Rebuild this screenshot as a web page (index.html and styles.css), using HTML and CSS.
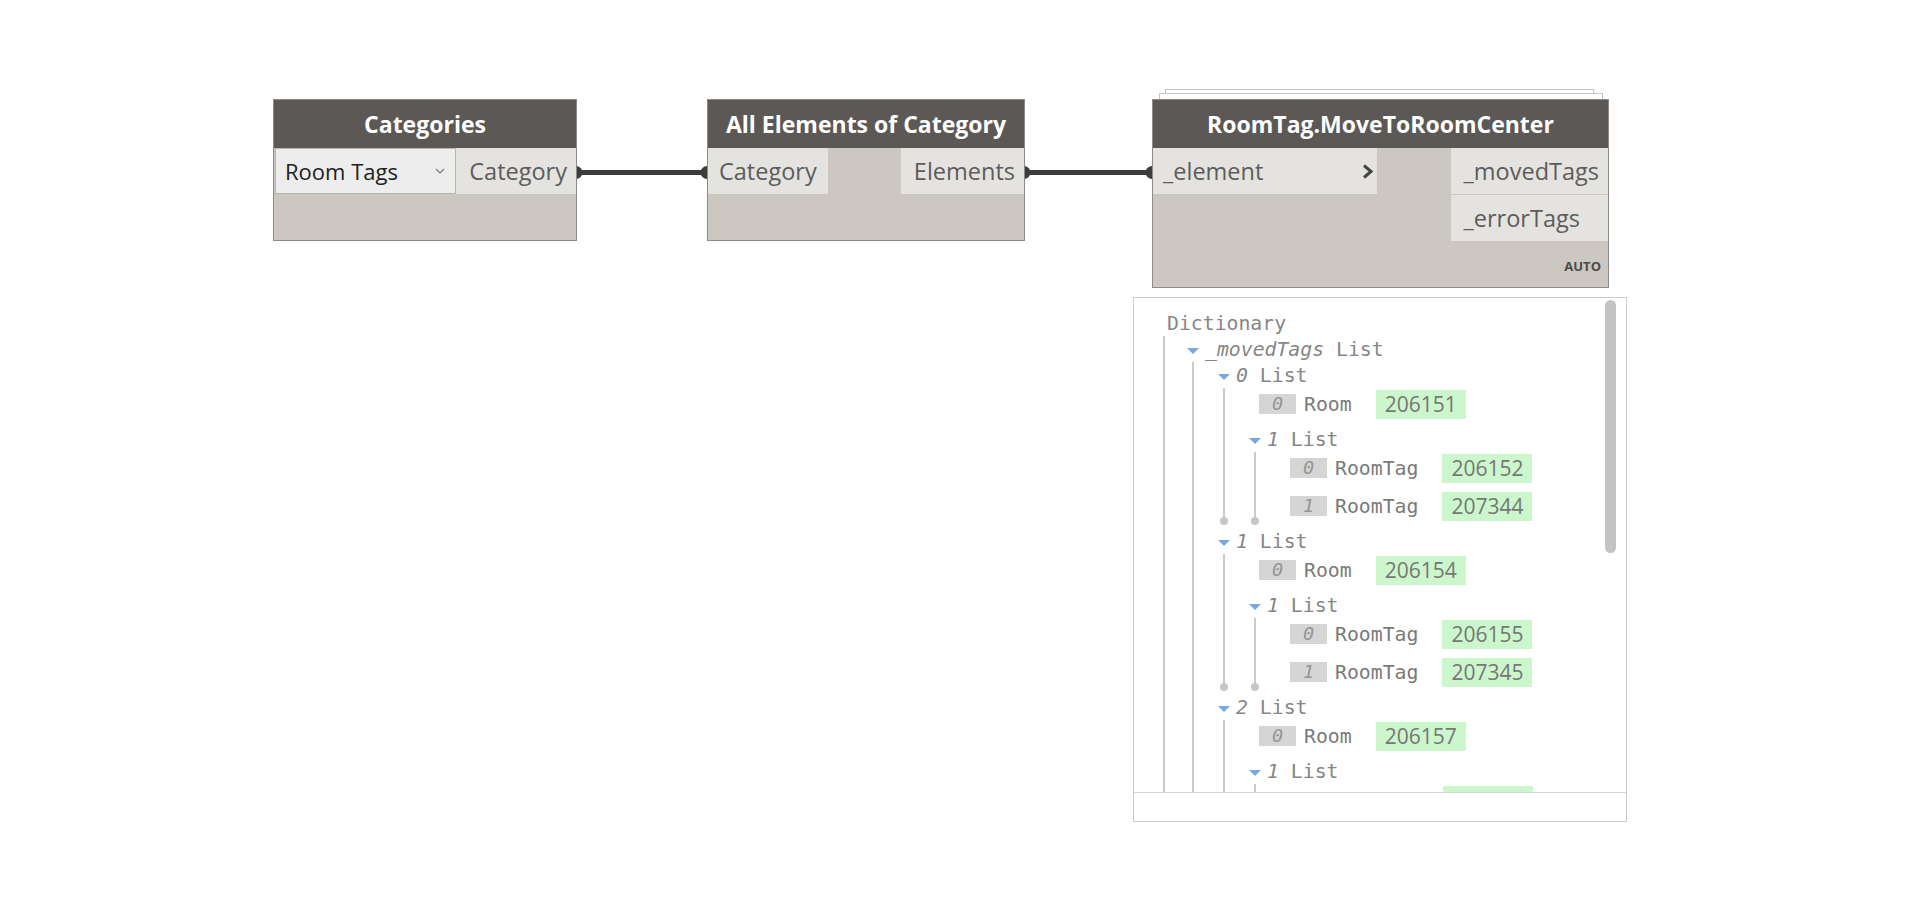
FILE: index.html
```html
<!DOCTYPE html>
<html lang="en">
<head>
    <meta charset="UTF-8">
    <title>Workspace</title>
    <link rel="stylesheet" href="styles.css">
</head>
<body>
    <div class="canvas">
        <!-- connectors between nodes -->
        <svg class="wires" width="1920" height="921" viewBox="0 0 1920 921">
            <g fill="#3c3c3c">
                <circle cx="576" cy="172.5" r="6.5"/>
                <circle cx="707" cy="172.5" r="6.5"/>
                <circle cx="1024" cy="172.5" r="6.5"/>
                <circle cx="1152" cy="172.5" r="6.5"/>
            </g>
            <g stroke="#3c3c3c" stroke-width="5">
                <path d="M576 172.5 H707"/>
                <path d="M1024 172.5 H1152"/>
            </g>
        </svg>

        <div class="node n-cat">
            <div class="node-title">Categories</div>
            <div class="node-ports">
                <div class="inputs">
                    <div class="dropdown">
                        <span>Room Tags</span>
                        <svg width="10" height="6" viewBox="0 0 10 6"><polyline points="1,1 5,5 9,1" fill="none" stroke="#777" stroke-width="1.2"/></svg>
                    </div>
                </div>
                <div class="outputs">
                    <div class="port port-out">Category</div>
                </div>
            </div>
            <div class="node-foot"></div>
        </div>

        <div class="node n-all">
            <div class="node-title">All Elements of Category</div>
            <div class="node-ports">
                <div class="inputs">
                    <div class="port port-in">Category</div>
                </div>
                <div class="outputs">
                    <div class="port port-out">Elements</div>
                </div>
            </div>
            <div class="node-foot"></div>
        </div>

        <div class="node n-tag stacked">
            <div class="node-title">RoomTag.MoveToRoomCenter</div>
            <div class="node-ports">
                <div class="inputs">
                    <div class="port port-in wide">
                        <span>_element</span>
                        <svg width="12" height="15" viewBox="0 0 12 15"><polyline points="2,1.5 9,7.5 2,13.5" fill="none" stroke="#444" stroke-width="3"/></svg>
                    </div>
                </div>
                <div class="outputs">
                    <div class="port port-out">_movedTags</div>
                    <div class="port port-out">_errorTags</div>
                </div>
            </div>
            <div class="node-foot"><span class="lacing">AUTO</span></div>
        </div>

        <!-- preview bubble under the last node -->
        <div class="watch">
            <div class="watch-tree">
                <div class="tnode">
                    <div class="thead"><span class="tname">Dictionary</span></div>
                    <div class="kids root-kids">
                        <div class="tnode">
                            <div class="thead"><span class="tri"></span><span class="tname"><i>_movedTags</i> List</span></div>
                            <div class="kids">
                                <div class="tnode">
                                    <div class="thead"><span class="tri"></span><span class="tname"><i>0</i> List</span></div>
                                    <div class="kids">
                                        <div class="item"><span class="idx">0</span><span class="lbl">Room</span><span class="val">206151</span></div>
                                        <div class="tnode">
                                            <div class="thead"><span class="tri"></span><span class="tname"><i>1</i> List</span></div>
                                            <div class="kids">
                                                <div class="item"><span class="idx">0</span><span class="lbl">RoomTag</span><span class="val">206152</span></div>
                                                <div class="item"><span class="idx">1</span><span class="lbl">RoomTag</span><span class="val">207344</span></div>
                                            </div>
                                        </div>
                                    </div>
                                </div>
                                <div class="tnode">
                                    <div class="thead"><span class="tri"></span><span class="tname"><i>1</i> List</span></div>
                                    <div class="kids">
                                        <div class="item"><span class="idx">0</span><span class="lbl">Room</span><span class="val">206154</span></div>
                                        <div class="tnode">
                                            <div class="thead"><span class="tri"></span><span class="tname"><i>1</i> List</span></div>
                                            <div class="kids">
                                                <div class="item"><span class="idx">0</span><span class="lbl">RoomTag</span><span class="val">206155</span></div>
                                                <div class="item"><span class="idx">1</span><span class="lbl">RoomTag</span><span class="val">207345</span></div>
                                            </div>
                                        </div>
                                    </div>
                                </div>
                                <div class="tnode">
                                    <div class="thead"><span class="tri"></span><span class="tname"><i>2</i> List</span></div>
                                    <div class="kids">
                                        <div class="item"><span class="idx">0</span><span class="lbl">Room</span><span class="val">206157</span></div>
                                        <div class="tnode">
                                            <div class="thead"><span class="tri"></span><span class="tname"><i>1</i> List</span></div>
                                            <div class="kids">
                                                <!-- next row, scrolled below the fold -->
                                                <div class="item item-next"><span class="val"></span></div>
                                            </div>
                                        </div>
                                    </div>
                                </div>
                            </div>
                        </div>
                    </div>
                </div>
                <div class="scrollbar"></div>
            </div>
            <div class="watch-foot"></div>
        </div>
    </div>
</body>
</html>
```

FILE: styles.css
```css
body {
    margin: 0;
    background: #fff;
    font-family: "Open Sans", "Liberation Sans", sans-serif;
}

.canvas {
    position: relative;
    width: 1920px;
    height: 921px;
    overflow: hidden;
}

.wires {
    position: absolute;
    left: 0;
    top: 0;
}

/* nodes */
.node {
    position: absolute;
    top: 99px;
    box-sizing: border-box;
    display: flex;
    flex-direction: column;
    border: 1px solid #8e8b88;
    background: #ccc7c1;
}

.n-cat { left: 273px; width: 304px; }
.n-all { left: 707px; width: 318px; }
.n-tag { left: 1152px; width: 457px; }

.stacked::before,
.stacked::after {
    content: '';
    position: absolute;
    z-index: -1;
    height: 40px;
    border: 1px solid #c4c4c4;
    background: #fff;
}
.stacked::before { top: -11px; left: 12px; right: 14px; }
.stacked::after { top: -7px; left: 6px; right: 5px; }

.node-title {
    height: 48px;
    display: flex;
    align-items: center;
    justify-content: center;
    background: #5b5855;
    color: #fff;
    font-size: 23px;
    font-weight: 700;
}

.node-ports {
    display: flex;
    justify-content: space-between;
}

.inputs, .outputs {
    display: flex;
    flex-direction: column;
    gap: 1px;
}

.port {
    height: 46px;
    box-sizing: border-box;
    display: flex;
    align-items: center;
    background: #e5e3df;
    color: #5c5c5c;
    font-size: 23.5px;
}

.port-in { padding: 0 11px; }
.port-out { padding: 0 9px 0 13px; }

.port-in.wide {
    width: 224px;
    justify-content: space-between;
    padding: 0 3px 0 10px;
}

.dropdown {
    width: 181px;
    height: 46px;
    box-sizing: border-box;
    margin: 0 0 0 1px;
    padding: 0 10px 0 9px;
    display: flex;
    align-items: center;
    justify-content: space-between;
    border: 1px solid #b4b4b4;
    background: #ededed;
    color: #222;
    font-size: 22px;
}

.node-foot {
    height: 46px;
    display: flex;
    justify-content: flex-end;
    align-items: flex-end;
    padding: 0 7px 12px;
    box-sizing: border-box;
}

.lacing {
    font-size: 13px;
    font-weight: 700;
    color: #4a4a4a;
}

/* preview bubble */
.watch {
    position: absolute;
    left: 1133px;
    top: 297px;
    width: 494px;
    box-sizing: border-box;
    border: 1px solid #cacaca;
    background: #fff;
    font-family: "DejaVu Sans Mono", "Liberation Mono", monospace;
    font-size: 19.8px;
    color: #868686;
}

.watch-tree {
    position: relative;
    height: 495px;
    overflow: hidden;
    padding: 12px 0 0 33px;
    box-sizing: border-box;
    border-bottom: 1px solid #d6d6d6;
}

.watch-foot {
    height: 28px;
}

.scrollbar {
    position: absolute;
    left: 471px;
    top: 2px;
    width: 11px;
    height: 253px;
    border-radius: 6px;
    background: #c3c3c3;
}

.thead {
    height: 26px;
    display: flex;
    align-items: center;
    white-space: pre;
}

.tri {
    width: 0;
    height: 0;
    margin: 4px 6px 0 0;
    border-left: 6px solid transparent;
    border-right: 6px solid transparent;
    border-top: 6px solid #74abdc;
}

.kids {
    position: relative;
    display: flex;
    flex-direction: column;
    padding-left: 31px;
}

/* tree guide line, ending in a dot where the list closes */
.kids::before {
    content: '';
    position: absolute;
    left: 5px;
    top: 0;
    bottom: 7px;
    width: 2px;
    background: #cbcbcb;
}
.kids::after {
    content: '';
    position: absolute;
    left: 2px;
    bottom: 3px;
    width: 8px;
    height: 8px;
    border-radius: 50%;
    background: #c6c6c6;
}

.root-kids { padding-left: 20px; }
.root-kids::before { left: -4px; }
.root-kids::after { display: none; }

.item {
    height: 29px;
    margin: 2px 0 7px;
    padding-left: 10px;
    display: flex;
    align-items: center;
}

.item-next {
    padding-left: 163px;
}
.item-next .val {
    width: 72px;
}

.idx {
    width: 37px;
    height: 20px;
    line-height: 20px;
    margin: -2px 8px 0 0;
    text-align: center;
    font-style: italic;
    font-size: 18.5px;
    color: #959595;
    background: #d5d5d5;
}

.lbl {
    margin-right: 24px;
    color: #7a7a7a;
}

.val {
    height: 29px;
    line-height: 29px;
    padding: 0 9px;
    background: #ccf6cc;
    color: #777;
    font-family: "Open Sans", "Liberation Sans", sans-serif;
    font-size: 21px;
}
```
